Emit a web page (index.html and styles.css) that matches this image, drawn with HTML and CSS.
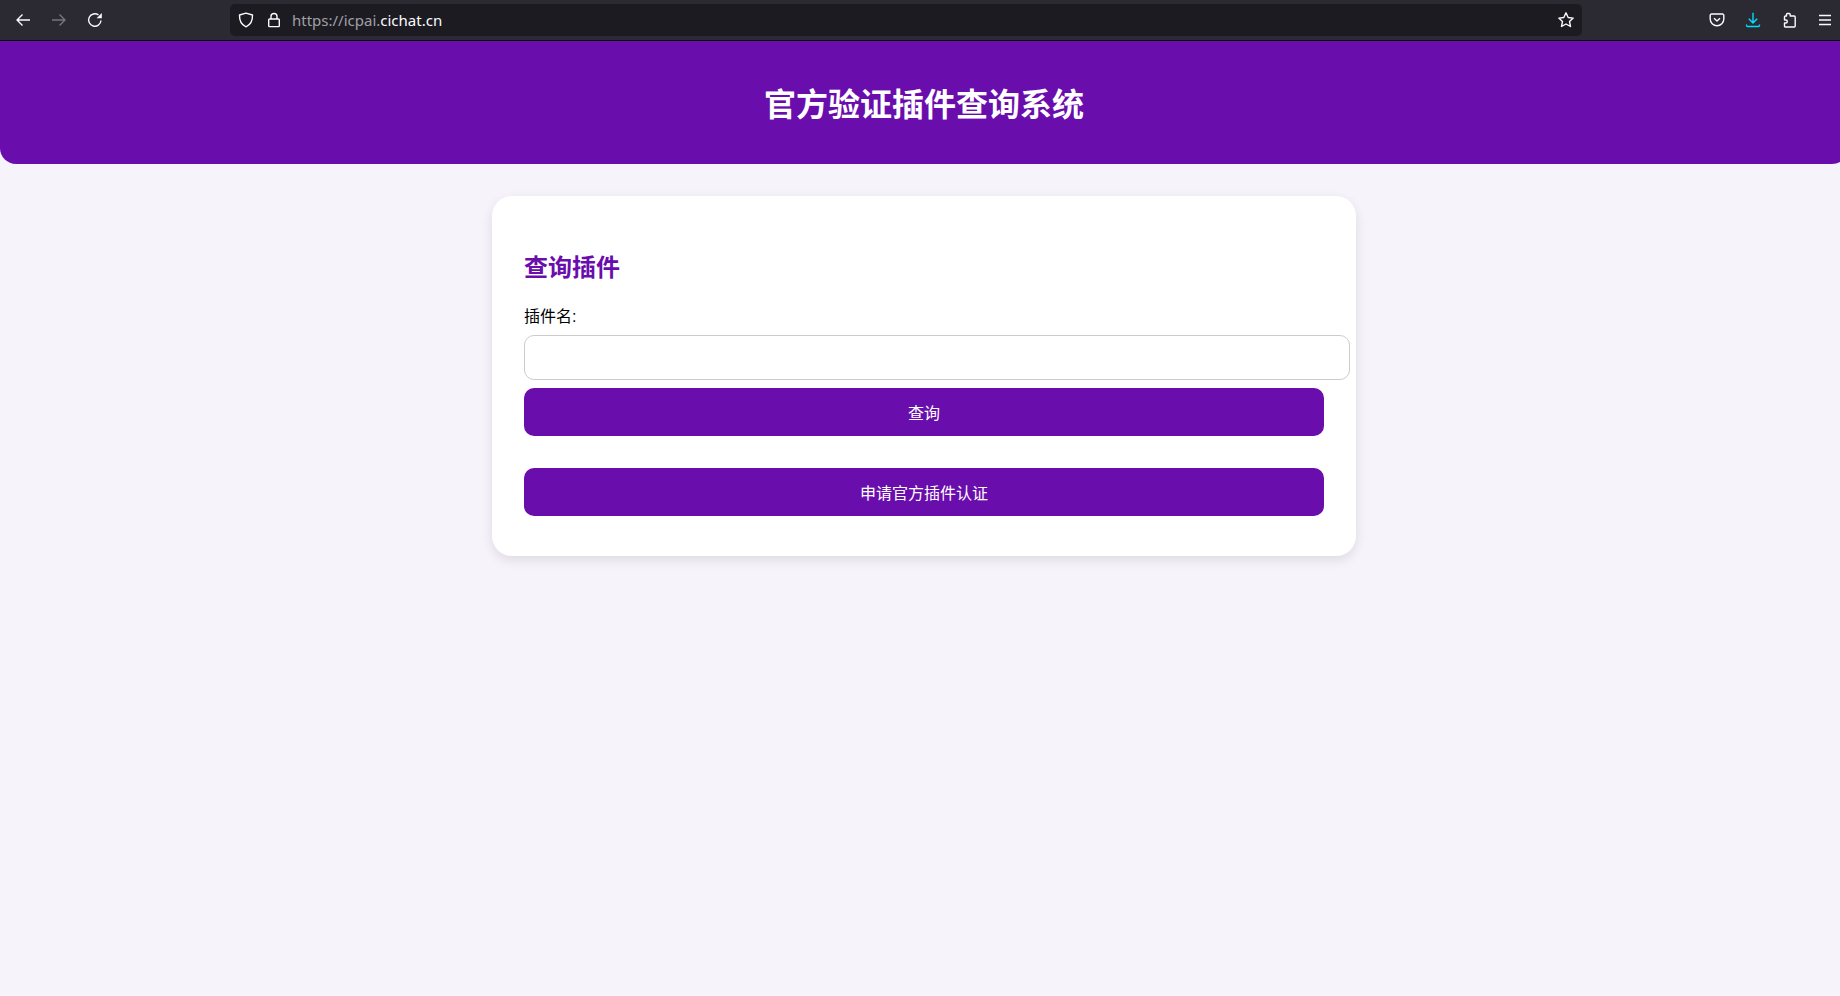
FILE: index.html
```html
<!DOCTYPE html>
<html>
	<head>
		<meta charset="UTF-8">
		<title>官方验证插件查询系统</title>
		<link rel="stylesheet" href="styles.css">
	</head>
	<body>
		<div class="browserBar">
			<div class="navBtns">
				<svg class="icon" viewBox="0 0 16 16"><path d="M15 8H2M7.5 2.5 2 8l5.5 5.5"/></svg>
				<svg class="icon dim" viewBox="0 0 16 16"><path d="M1 8h13M8.500 2.500 14 8l-5.500 5.500"/></svg>
				<svg class="icon" viewBox="0 0 16 16"><path d="M14 8.500A6.200 6.200 0 1 1 11.500 3"/><path class="solid" d="M14.800 1v5.200H9.600z"/></svg>
			</div>
			<div class="urlBar">
				<svg class="icon" viewBox="0 0 16 16"><path d="M8 1.200 14.500 3c.2 5.500-1.500 9.500-6.500 11.800C3 12.500 1.300 8.500 1.500 3z"/></svg>
				<svg class="icon lock" viewBox="0 0 16 16"><path d="M5 7V4.500a3 3 0 0 1 6 0V7M3.500 7h9a.8.8 0 0 1 .8.800v6a.8.8 0 0 1-.8.800h-9a.8.8 0 0 1-.8-.8v-6a.8.8 0 0 1 .8-.8z"/></svg>
				<span class="url">https://icpai.<b>cichat.cn</b></span>
				<svg class="icon star" viewBox="0 0 16 16"><path d="M8 .8 10.200 5.500l5 .6-3.700 3.400 1 5L8 12l-4.500 2.500 1-5L.8 6.100l5-.6z"/></svg>
			</div>
			<div class="toolBtns">
				<svg class="icon" viewBox="0 0 16 16"><path d="M2.500 2h11a1.300 1.300 0 0 1 1.300 1.300V7a6.800 6.800 0 0 1-13.600 0V3.300A1.300 1.300 0 0 1 2.500 2zM5 6.300l3 2.700 3-2.700"/></svg>
				<svg class="icon blue" viewBox="0 0 16 16"><path d="M8 .8v10M3.800 6.800 8 11l4.200-4.200M1.500 12.500v.8c0 .7.500 1.200 1.200 1.200h10.600c.7 0 1.200-.5 1.200-1.200v-.8"/></svg>
				<svg class="icon" viewBox="0 0 16 16"><path d="M6.500 1.500h1.700a1 1 0 0 1 1 1V4h4a1 1 0 0 1 1 1v9a1 1 0 0 1-1 1H4.500a1 1 0 0 1-1-1v-3h1.300a1.500 1.500 0 0 0 0-3H3.500V5a1 1 0 0 1 1-1h1V2.500a1 1 0 0 1 1-1z"/></svg>
				<svg class="icon" viewBox="0 0 16 16"><path d="M2 3.500h12M2 8h12M2 12.500h12"/></svg>
			</div>
		</div>
		<div class="page">
			<div class="header">
				<h1>官方验证插件查询系统</h1>
			</div>
			<div class="card">
				<h2>查询插件</h2>
				<label for="pluginName">插件名:</label>
				<input type="text" id="pluginName">
				<button type="button">查询</button>
				<button type="button" class="applyBtn">申请官方插件认证</button>
			</div>
		</div>
	</body>
</html>
```

FILE: styles.css
```css
html,
body{
	margin: 0;
	height: 100%;
	overflow: hidden;
}
body{
	background: #f6f3fb;
	font-family: "Liberation Sans", "Noto Sans CJK SC", sans-serif;
	font-size: 16px;
	color: #000;
}
.browserBar{
	height: 40px;
	background: #2b2a33;
	border-bottom: 1px solid #0c0c0d;
	display: flex;
	align-items: center;
}
.icon{
	width: 16px;
	height: 16px;
	fill: none;
	stroke: #fbfbfe;
	stroke-width: 1.4;
	stroke-linejoin: round;
	flex-shrink: 0;
}
.icon .solid{
	fill: #fbfbfe;
	stroke: none;
}
.icon.dim{
	stroke: #77767d;
}
.icon.blue{
	stroke: #00ddff;
}
.navBtns{
	width: 230px;
	padding-left: 15px;
	box-sizing: border-box;
	display: flex;
	gap: 20px;
}
.urlBar{
	width: 1352px;
	height: 32px;
	background: #1c1b22;
	border-radius: 5px;
	display: flex;
	align-items: center;
	padding: 0 8px;
	box-sizing: border-box;
}
.urlBar .lock{
	margin-left: 12px;
}
.urlBar .star{
	margin-left: auto;
}
.url{
	margin-left: 10px;
	font-family: "Noto Sans", sans-serif;
	font-size: 15px;
	color: #a0a0a6;
}
.url b{
	font-weight: normal;
	color: #fbfbfe;
}
.toolBtns{
	margin-left: 127px;
	display: flex;
	gap: 20px;
}
.page{
	width: 1848px;
}
.header{
	height: 121px;
	padding-bottom: 2px;
	background: #6a0dad;
	border-radius: 0 0 16px 16px;
	display: flex;
	align-items: center;
	justify-content: center;
}
.header h1{
	margin: 0;
	color: #fff;
	font-size: 32px;
	font-weight: bold;
}
.card{
	width: 800px;
	margin: 32px auto 0;
	padding: 32px 32px 40px;
	background: #fff;
	border-radius: 20px;
	box-shadow: 0 4px 12px rgba(0,0,0,0.1);
}
.card h2{
	margin: 20px 0 20px;
	color: #6a0dad;
	font-size: 24px;
}
.card label{
	display: block;
	margin-bottom: 8px;
}
.card input{
	display: block;
	width: 100%;
	height: 19px;
	padding: 12px;
	margin-bottom: 8px;
	border: 1px solid #ccc;
	border-radius: 10px;
	font-size: 16px;
	background: #fff;
}
.card button{
	display: block;
	width: 100%;
	height: 48px;
	border: none;
	border-radius: 10px;
	background: #6a0dad;
	color: #fff;
	font-family: inherit;
	font-size: 16px;
}
.card .applyBtn{
	margin-top: 32px;
}
```
